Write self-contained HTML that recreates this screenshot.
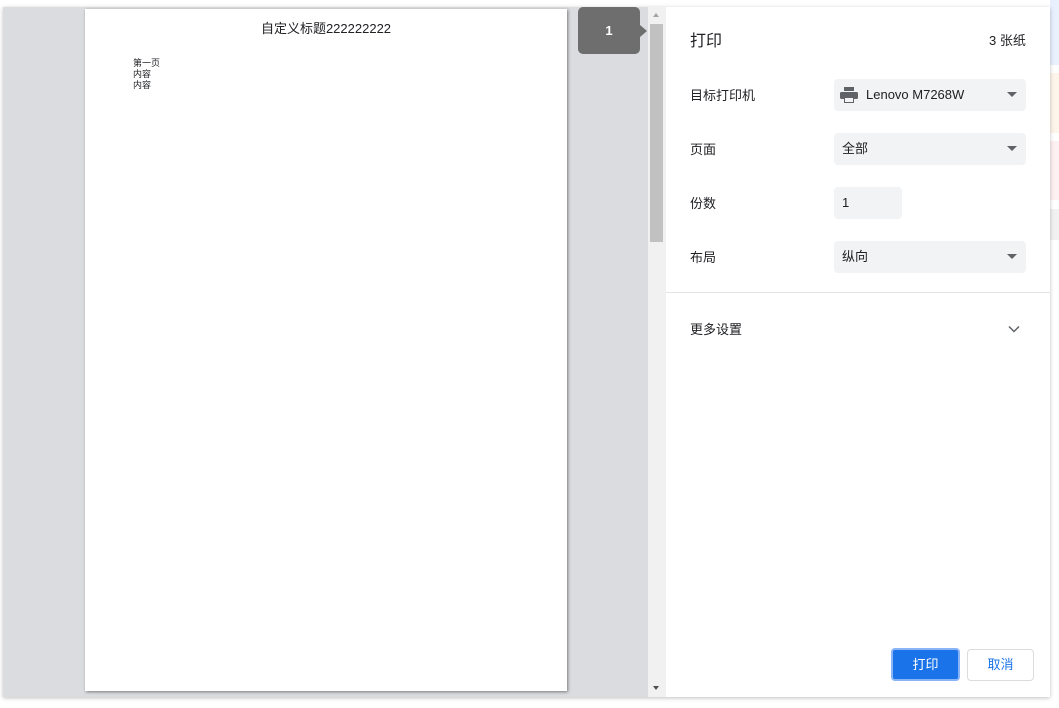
<!DOCTYPE html>
<html><head><meta charset="utf-8"><style>
*{margin:0;padding:0;box-sizing:border-box}
body{width:1059px;height:708px;background:#fff;position:relative;overflow:hidden;font-family:"Liberation Sans","Noto Sans CJK SC",sans-serif;color:#202124}
.abs{position:absolute}
.sel{position:absolute;left:834px;width:192px;height:32px;background:#f1f3f4;border-radius:4px;font-size:13px;line-height:32px;padding-left:8px}
.sel .ar{position:absolute;right:9px;top:13px;width:0;height:0;border-left:5px solid transparent;border-right:5px solid transparent;border-top:5px solid #5f6368}
.lbl{position:absolute;left:690px;font-size:13px}
</style></head><body>
<div class="abs" style="left:1050px;top:0;width:9px;height:65px;background:#e8f0fe"></div>
<div class="abs" style="left:1050px;top:73px;width:9px;height:60px;background:#fdf5ea"></div>
<div class="abs" style="left:1050px;top:141px;width:9px;height:59px;background:#fdf0f0"></div>
<div class="abs" style="left:1050px;top:209px;width:9px;height:31px;background:#f1f1f1"></div>
<div class="abs" style="left:3px;top:7px;width:1047px;height:690px;box-shadow:0 1px 4px rgba(0,0,0,.25)"></div>
<div class="abs" style="left:3px;top:7px;width:645px;height:690px;background:#dadce0"></div>
<div class="abs" style="left:85px;top:9px;width:482px;height:682px;background:#fff;box-shadow:1px 1px 3px rgba(0,0,0,.45)">
 <div class="abs" style="left:0;right:0;top:9px;text-align:center;font-size:13px">自定义标题222222222</div>
 <div class="abs" style="left:48px;top:49px;font-size:9px;line-height:11px">第一页<br>内容<br>内容</div>
</div>
<div class="abs" style="left:578px;top:7px;width:62px;height:47px;background:#6e6e6e;border-radius:5px;color:#fff;font-size:13px;font-weight:bold;text-align:center;line-height:47px">1</div>
<div class="abs" style="left:640px;top:25px;width:0;height:0;border-top:6px solid transparent;border-bottom:6px solid transparent;border-left:7px solid #6e6e6e"></div>
<div class="abs" style="left:648px;top:7px;width:18px;height:690px;background:#f1f1f1"></div>
<div class="abs" style="left:650px;top:24px;width:13px;height:218px;background:#c1c1c1"></div>
<div class="abs" style="left:653px;top:13px;border-left:3.5px solid transparent;border-right:3.5px solid transparent;border-bottom:4px solid #a3a3a3"></div>
<div class="abs" style="left:653px;top:686px;border-left:3.5px solid transparent;border-right:3.5px solid transparent;border-top:4px solid #505050"></div>
<div class="abs" style="left:666px;top:7px;width:384px;height:690px;background:#fff"></div>
<div class="abs" style="left:690px;top:27px;font-size:16px">打印</div>
<div class="abs" style="left:989px;top:30px;font-size:13px">3 张纸</div>
<div class="lbl" style="top:85px">目标打印机</div>
<div class="sel" style="top:79px;padding-left:32px">
 <svg class="abs" style="left:6px;top:8px" width="18" height="16" viewBox="0 0 18 16"><rect x="4" y="0" width="10" height="4" fill="#5f6368"/><rect x="0" y="5" width="18" height="7" rx="1.5" fill="#5f6368"/><rect x="4" y="10" width="10" height="6" fill="#5f6368"/><rect x="5" y="11" width="8" height="4" fill="#f1f3f4"/></svg>
 Lenovo M7268W<span class="ar"></span></div>
<div class="lbl" style="top:139px">页面</div>
<div class="sel" style="top:133px">全部<span class="ar"></span></div>
<div class="lbl" style="top:193px">份数</div>
<div class="sel" style="top:187px;width:68px">1</div>
<div class="lbl" style="top:247px">布局</div>
<div class="sel" style="top:241px">纵向<span class="ar"></span></div>
<div class="abs" style="left:666px;top:292px;width:384px;height:1px;background:#e3e4e6"></div>
<div class="lbl" style="top:319px">更多设置</div>
<svg class="abs" style="left:1008px;top:325px" width="12" height="8" viewBox="0 0 12 8"><path d="M1 1.5L6 6.5L11 1.5" stroke="#5f6368" stroke-width="1.5" fill="none"/></svg>
<div class="abs" style="left:891px;top:648px;width:69px;height:33px;background:#1a73e8;border:2px solid #8ab4f8;border-radius:4px;color:#fff;font-size:13px;text-align:center;line-height:29px">打印</div>
<div class="abs" style="left:967px;top:649px;width:67px;height:32px;border:1px solid #dadce0;border-radius:4px;color:#1a73e8;font-size:13px;text-align:center;line-height:30px">取消</div>
</body></html>
